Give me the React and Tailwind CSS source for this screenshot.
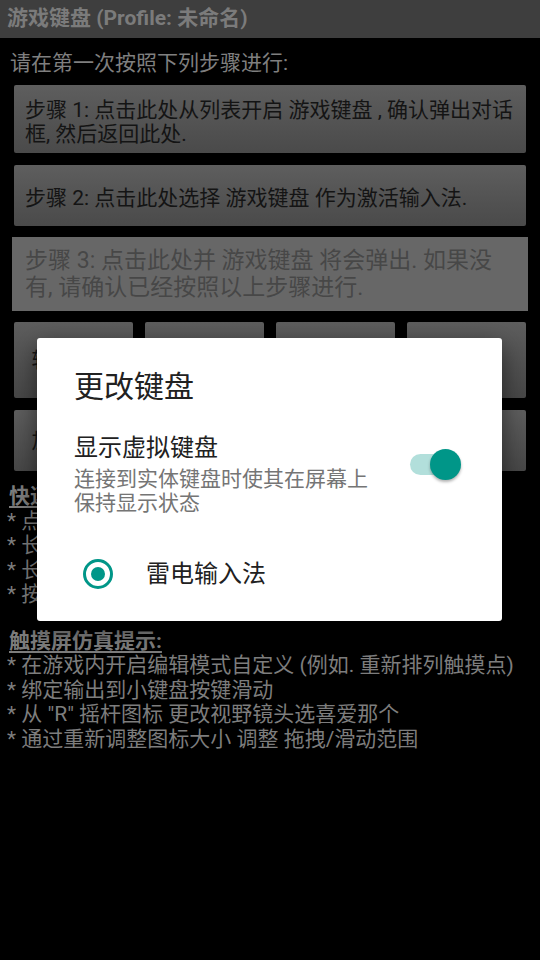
const font = { fontFamily: '"Roboto", "Noto Sans CJK SC", sans-serif' };

const quickTips = [
  "* 点击按键图标 打开按键映射",
  "* 长按图标 拖动到新的位置",
  "* 长按空白处 添加新的按键",
  "* 按返回键 退出编辑模式",
];

const touchTips = [
  "* 在游戏内开启编辑模式自定义 (例如. 重新排列触摸点)",
  "* 绑定输出到小键盘按键滑动",
  '* 从 "R" 摇杆图标 更改视野镜头选喜爱那个',
  "* 通过重新调整图标大小 调整 拖拽/滑动范围",
];

const rowOne = ["转换配置", "保存配置", "删除配置", "导出"];
const rowTwo = ["加载配置", "导入配置", "重置配置", "帮助"];

const StepButton = ({ children, className }) => (
  <div
    className={
      "mx-[14px] rounded-[2px] bg-gradient-to-b from-[#5e5e5e] to-[#4a4a4a] pl-[11px] pr-[10px] text-[21px] leading-[24px] text-[#141414] " +
      className
    }
  >
    {children}
  </div>
);

const GridButton = ({ label, height }) => (
  <div
    className={
      "flex items-center justify-center rounded-[2px] bg-gradient-to-b from-[#5e5e5e] to-[#474747] text-[21px] leading-[24px] text-[#141414] " +
      height
    }
  >
    {label}
  </div>
);

const KeyboardSwitch = () => (
  <div className="relative mt-[16px] h-[31px] w-[51px] shrink-0">
    <div className="absolute left-0 top-[5px] h-[21px] w-[46px] rounded-full bg-[#b2dfdb]" />
    <div className="absolute right-0 top-0 h-[31px] w-[31px] rounded-full bg-[#009688] shadow-[0_2px_3px_rgba(0,0,0,0.3)]" />
  </div>
);

const ChangeKeyboardDialog = () => (
  <div className="absolute left-[37px] top-[338px] h-[283px] w-[465px] rounded-[3px] bg-white shadow-[0_8px_24px_rgba(0,0,0,0.5)]">
    <h2 className="pl-[37px] pt-[31px] text-[30px] leading-[36px] text-[#212121]">更改键盘</h2>

    <div className="mt-[28px] flex items-start pl-[37px] pr-[41px]">
      <div className="flex-1">
        <div className="text-[24px] leading-[30px] text-[#212121]">显示虚拟键盘</div>
        <div className="mt-[4px] w-[300px] text-[21px] leading-[24px] text-[#757575]">
          连接到实体键盘时使其在屏幕上保持显示状态
        </div>
      </div>
      <KeyboardSwitch />
    </div>

    <div className="mt-[44px] flex items-center pl-[46px]">
      <div className="flex h-[30px] w-[30px] items-center justify-center rounded-full border-[3px] border-[#009688]">
        <div className="h-[14px] w-[14px] rounded-full bg-[#009688]" />
      </div>
      <span className="ml-[33px] text-[24px] leading-[30px] text-[#212121]">雷电输入法</span>
    </div>
  </div>
);

export default function App() {
  return (
    <div className="relative h-[960px] w-[540px] overflow-hidden bg-black" style={font}>
      <div className="flex h-[38px] items-center bg-[#3e3e3e] px-[7px] text-[21px] font-bold text-[#7b7b7b]">
        游戏键盘 (Profile: 未命名)
      </div>

      <p className="mt-[13px] pl-[10px] text-[21px] leading-[24px] text-[#7f7f7f]">请在第一次按照下列步骤进行:</p>

      <StepButton className="mt-[10px] pb-[7px] pt-[13px]">
        步骤 1: 点击此处从列表开启 游戏键盘 , 确认弹出对话框, 然后返回此处.
      </StepButton>

      <StepButton className="mt-[12px] h-[61px] pt-[21px]">步骤 2: 点击此处选择 游戏键盘 作为激活输入法.</StepButton>

      <div className="mx-[12px] mt-[11px] bg-[#676767] py-[10px] pl-[13px] pr-[20px] text-[23px] leading-[27px] text-[#474747]">
        步骤 3: 点击此处并 游戏键盘 将会弹出. 如果没有, 请确认已经按照以上步骤进行.
      </div>

      <div className="mx-[14px] mt-[11px] grid grid-cols-4 gap-[12px]">
        {rowOne.map((label) => (
          <GridButton key={label} label={label} height="h-[76px]" />
        ))}
      </div>
      <div className="mx-[14px] mt-[12px] grid grid-cols-4 gap-[12px]">
        {rowTwo.map((label) => (
          <GridButton key={label} label={label} height="h-[61px]" />
        ))}
      </div>

      <div className="mt-[13px] px-[7px] text-[21px] leading-[24.5px] text-[#7d7d7d]">
        <div className="pl-[2px] font-bold underline underline-offset-[3px]">快速提示:</div>
        {quickTips.map((tip) => (
          <div key={tip}>{tip}</div>
        ))}

        <div className="mt-[22px] pl-[2px] font-bold underline underline-offset-[3px]">触摸屏仿真提示:</div>
        {touchTips.map((tip) => (
          <div key={tip} className="whitespace-nowrap">
            {tip}
          </div>
        ))}
      </div>

      <ChangeKeyboardDialog />
    </div>
  );
}
